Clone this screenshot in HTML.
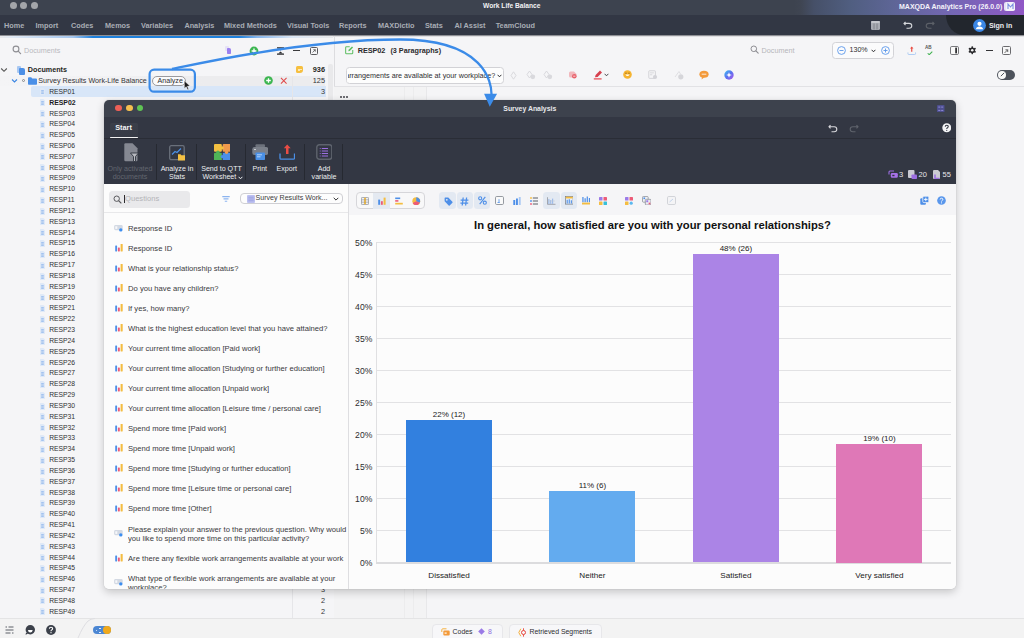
<!DOCTYPE html>
<html><head><meta charset="utf-8">
<style>
*{margin:0;padding:0;box-sizing:border-box}
html,body{width:1024px;height:638px;overflow:hidden;background:#f5f5f7;font-family:"Liberation Sans",sans-serif;position:relative}
.a{position:absolute}
.t{position:absolute;white-space:nowrap;line-height:1}
#titlebar{left:0;top:0;width:1024px;height:15px;background:linear-gradient(90deg,#3d434f 0,#3d434f 77.5%,#3f4552 78.2%,#465068 79.5%,#505e80 83%,#5d6595 87%,#7467b4 93%,#9058c6 100%)}
.dot{position:absolute;width:7px;height:7px;border-radius:50%;background:#a3a5aa;top:2.2px}
#menubar{left:0;top:15px;width:1024px;height:20px;background:#323744}
.mi{position:absolute;top:21.7px;font-size:7.3px;font-weight:bold;color:#a9adb5;white-space:nowrap;line-height:1}
#signin{left:946px;top:15px;width:78px;height:20px;background:#22262d;border-bottom-left-radius:18px 20px}
#leftpanel{left:0;top:35px;width:334px;height:583px;background:#f5f5f7}
#editor{left:334px;top:35px;width:690px;height:583px;background:#f5f5f7;border-left:1px solid #dcdcdf}
#bottombar{left:0;top:618px;width:1024px;height:20px;background:#f3f3f3;border-top:1px solid #e4e4e5}
.row{position:absolute;left:49.2px;font-size:6.75px;color:#2f2f32;white-space:nowrap;line-height:1}
.doc{position:absolute;left:40px;width:5px;height:7px;background:#dfe7f5;border-radius:1px}
.doc:after{content:"";position:absolute;left:1.2px;top:1.5px;width:2.6px;height:4px;background:repeating-linear-gradient(180deg,#8fb4ea 0 0.7px,transparent 0.7px 1.4px)}
</style></head><body>

<!-- TITLE BAR -->
<div id="titlebar" class="a"></div>
<div class="dot" style="left:9.5px"></div>
<div class="dot" style="left:20.2px"></div>
<div class="dot" style="left:31px"></div>
<div class="t" style="left:483px;top:3.4px;font-size:6.65px;font-weight:bold;color:#f2f2f4">Work Life Balance</div>
<div class="t" style="left:899px;top:3px;font-size:7px;font-weight:bold;color:#f4f2fa">MAXQDA Analytics Pro (26.0.0)</div>
<div class="a" style="left:1004px;top:2px;width:9px;height:9px;border-radius:2px;background:#e6e2f5"></div>

<!-- MENU BAR -->
<div id="menubar" class="a"></div>
<div id="signin" class="a"></div>
<div class="mi" style="left:4px">Home</div>
<div class="mi" style="left:35.6px">Import</div>
<div class="mi" style="left:71px">Codes</div>
<div class="mi" style="left:105px">Memos</div>
<div class="mi" style="left:141px">Variables</div>
<div class="mi" style="left:184.4px">Analysis</div>
<div class="mi" style="left:224px">Mixed Methods</div>
<div class="mi" style="left:287px">Visual Tools</div>
<div class="mi" style="left:339px">Reports</div>
<div class="mi" style="left:378px">MAXDictio</div>
<div class="mi" style="left:425px">Stats</div>
<div class="mi" style="left:454.5px">AI Assist</div>
<div class="mi" style="left:495.7px">TeamCloud</div>

<!-- LEFT PANEL -->
<div id="leftpanel" class="a"></div>

<!-- left toolbar -->
<div class="a" style="left:0;top:35px;width:1024px;height:1px;background:#8f9095"></div>
<div class="a" style="left:0;top:36px;width:1024px;height:1px;background:#dedee1"></div>
<div class="a" style="left:0;top:36px;width:333px;height:2px;background:linear-gradient(90deg,#e8e8ea 0,#dfe8f4 4%,#a5c6ee 21.9%,#1e80dc 27.9%,#1e80dc 71.8%,#86b5ec 77.2%,#dbe6f4 87.7%,#e8e8ea 100%)"></div>
<svg class="a" style="left:12px;top:45px" width="10" height="10" viewBox="0 0 10 10"><circle cx="4" cy="4" r="2.9" fill="none" stroke="#8e8e93" stroke-width="1.1"/><path d="M6.2 6.2L8.6 8.6" stroke="#8e8e93" stroke-width="1.2" stroke-linecap="round"/></svg>
<div class="t" style="left:24px;top:46.8px;font-size:7.2px;color:#b9b9be">Documents</div>
<div class="a" style="left:224.5px;top:46.2px;width:4px;height:5px;background:#e6e2f6;border-radius:1px"></div>
<div class="a" style="left:227px;top:48.4px;width:4.4px;height:5.6px;background:#9b80f0;border-radius:0.8px 1.8px 0.8px 0.8px"></div>
<svg class="a" style="left:248.5px;top:46px" width="10" height="10" viewBox="0 0 10 10"><circle cx="5" cy="5" r="4.4" fill="#3db651"/><path d="M5 2.6V7.4M2.6 5H7.4" stroke="#fff" stroke-width="1.4"/></svg>
<svg class="a" style="left:276.5px;top:46.5px" width="7" height="8" viewBox="0 0 7 8"><path d="M0 0.3H7V1.5H0Z M0 6.5H7V7.7H0Z" fill="#2b2b2e"/><path d="M1.3 1.4L3.5 3.4L5.7 1.4Z M1.3 6.6L3.5 4.6L5.7 6.6Z" fill="#2b2b2e"/></svg>
<div class="a" style="left:293px;top:49.8px;width:6.5px;height:1.2px;background:#3a3a3d"></div>
<div class="a" style="left:310px;top:46.5px;width:7.8px;height:8px;border:1px solid #5a5a5e;border-radius:1.5px;border-top-width:1.6px"></div>
<svg class="a" style="left:312px;top:49px" width="4" height="4" viewBox="0 0 4 4"><path d="M0.5 3.5L3.3 0.7M1.3 0.7H3.3V2.7" stroke="#444" stroke-width="0.7" fill="none"/></svg>

<!-- tree -->
<div class="a" style="left:0;top:75.5px;width:292px;height:10.6px;background:linear-gradient(90deg,#f4f4f6 0,#f1f1f3 40%,#ececee 70%)"></div>
<div class="a" style="left:292px;top:75.5px;width:33px;height:10.6px;background:#ececee"></div>
<div class="a" style="left:30.5px;top:86.1px;width:295px;height:10.6px;background:#d8e6f8;border-radius:2px 0 0 2px"></div>
<div class="a" style="left:292.3px;top:75.5px;width:0.8px;height:542.5px;background:#e6e6e9"></div>
<div class="a" style="left:327.5px;top:64px;width:5.5px;height:40px;background:#e9e9eb;border-radius:2px 2px 0 0"></div>
<svg class="a" style="left:0;top:67px" width="8" height="6" viewBox="0 0 8 6"><path d="M1.2 1.5L4 4.3L6.8 1.5" stroke="#555" stroke-width="1.1" fill="none"/></svg>
<div class="a" style="left:17px;top:66px;width:4px;height:7px;background:#a9c8f2;border-radius:1px"></div>
<div class="a" style="left:19px;top:67.5px;width:6px;height:7px;background:#4c8fe6;border-radius:1px 2px 1px 1px"></div>
<div class="t" style="left:27.8px;top:66.1px;font-size:7.2px;font-weight:bold;color:#1f1f22">Documents</div>
<svg class="a" style="left:11px;top:78px" width="7" height="6" viewBox="0 0 7 6"><path d="M1 1.5L3.5 4L6 1.5" stroke="#3b86e3" stroke-width="1.1" fill="none"/></svg>
<div class="a" style="left:21.8px;top:79.1px;width:3.2px;height:3.2px;border:0.8px solid #888;border-radius:50%"></div>
<svg class="a" style="left:28px;top:76.5px" width="9" height="8" viewBox="0 0 9 8"><path d="M0 1.2Q0 0.3 0.9 0.3H3.2L4.2 1.4H8.1Q9 1.4 9 2.3V7Q9 7.7 8.2 7.7H0.8Q0 7.7 0 7Z" fill="#4a8fe7"/></svg>
<div class="t" style="left:38.3px;top:77.9px;font-size:7.17px;color:#333336">Survey Results Work-Life Balance</div>
<div class="a" style="left:152.3px;top:75.6px;width:34px;height:10.5px;border:0.9px solid #9a9a9e;border-radius:5px;background:#fbfbfc"></div>
<div class="t" style="left:157.6px;top:78.1px;font-size:7.1px;color:#2e2e31">Analyze</div>
<svg class="a" style="left:267.9px;top:76.4px" width="0" height="0"></svg>
<svg class="a" style="left:263.6px;top:76.4px" width="9" height="9" viewBox="0 0 9 9"><circle cx="4.5" cy="4.5" r="4.3" fill="#3db651"/><path d="M4.5 2.2V6.8M2.2 4.5H6.8" stroke="#fff" stroke-width="1.3"/></svg>
<svg class="a" style="left:280px;top:77px" width="7.5" height="7.5" viewBox="0 0 8 8"><path d="M1 1L7 7M7 1L1 7" stroke="#e0494a" stroke-width="1.1"/></svg>
<div class="a" style="left:296px;top:66.2px;width:7.3px;height:7.3px;background:#f6bf3f;border-radius:1.5px 1.5px 3px 1.5px"></div>
<div class="a" style="left:297.6px;top:68.8px;width:4px;height:0.8px;background:#fde9b5"></div>
<div class="a" style="left:297.6px;top:70.4px;width:2.6px;height:0.8px;background:#fde9b5"></div>
<div class="t" style="right:699px;top:66.4px;font-size:7.3px;font-weight:bold;color:#1f1f22">936</div>
<div class="t" style="right:699px;top:77.2px;font-size:7.3px;color:#333336">125</div>
<div class="t" style="right:699px;top:88px;font-size:7.3px;color:#333336">3</div>
<div class="t" style="right:699px;top:586.2px;font-size:7.3px;color:#333336">3</div>
<div class="t" style="right:699px;top:597px;font-size:7.3px;color:#333336">2</div>
<div class="t" style="right:699px;top:607.8px;font-size:7.3px;color:#333336">2</div>
<svg class="a" style="left:40.3px;top:88.4px" width="5" height="7" viewBox="0 0 5 7"><path d="M0.6 0H3.4L5 1.6V6.4Q5 7 4.4 7H0.6Q0 7 0 6.4V0.6Q0 0 0.6 0Z" fill="#dfe9f7"/><path d="M1.2 2.6H3.8M1.2 4H3.8M1.2 5.4H3.8" stroke="#7aa8ea" stroke-width="0.65"/></svg><div class="row" style="top:88.8px">RESP01</div>
<svg class="a" style="left:40.3px;top:99.2px" width="5" height="7" viewBox="0 0 5 7"><path d="M0.6 0H3.4L5 1.6V6.4Q5 7 4.4 7H0.6Q0 7 0 6.4V0.6Q0 0 0.6 0Z" fill="#dfe9f7"/><path d="M1.2 2.6H3.8M1.2 4H3.8M1.2 5.4H3.8" stroke="#7aa8ea" stroke-width="0.65"/></svg><div class="row" style="top:99.6px;font-weight:bold;color:#1c1c1e;font-size:6.9px">RESP02</div>
<svg class="a" style="left:40.3px;top:110.1px" width="5" height="7" viewBox="0 0 5 7"><path d="M0.6 0H3.4L5 1.6V6.4Q5 7 4.4 7H0.6Q0 7 0 6.4V0.6Q0 0 0.6 0Z" fill="#dfe9f7"/><path d="M1.2 2.6H3.8M1.2 4H3.8M1.2 5.4H3.8" stroke="#7aa8ea" stroke-width="0.65"/></svg><div class="row" style="top:110.5px">RESP03</div>
<svg class="a" style="left:40.3px;top:120.9px" width="5" height="7" viewBox="0 0 5 7"><path d="M0.6 0H3.4L5 1.6V6.4Q5 7 4.4 7H0.6Q0 7 0 6.4V0.6Q0 0 0.6 0Z" fill="#dfe9f7"/><path d="M1.2 2.6H3.8M1.2 4H3.8M1.2 5.4H3.8" stroke="#7aa8ea" stroke-width="0.65"/></svg><div class="row" style="top:121.3px">RESP04</div>
<svg class="a" style="left:40.3px;top:131.7px" width="5" height="7" viewBox="0 0 5 7"><path d="M0.6 0H3.4L5 1.6V6.4Q5 7 4.4 7H0.6Q0 7 0 6.4V0.6Q0 0 0.6 0Z" fill="#dfe9f7"/><path d="M1.2 2.6H3.8M1.2 4H3.8M1.2 5.4H3.8" stroke="#7aa8ea" stroke-width="0.65"/></svg><div class="row" style="top:132.1px">RESP05</div>
<svg class="a" style="left:40.3px;top:142.6px" width="5" height="7" viewBox="0 0 5 7"><path d="M0.6 0H3.4L5 1.6V6.4Q5 7 4.4 7H0.6Q0 7 0 6.4V0.6Q0 0 0.6 0Z" fill="#dfe9f7"/><path d="M1.2 2.6H3.8M1.2 4H3.8M1.2 5.4H3.8" stroke="#7aa8ea" stroke-width="0.65"/></svg><div class="row" style="top:143.0px">RESP06</div>
<svg class="a" style="left:40.3px;top:153.4px" width="5" height="7" viewBox="0 0 5 7"><path d="M0.6 0H3.4L5 1.6V6.4Q5 7 4.4 7H0.6Q0 7 0 6.4V0.6Q0 0 0.6 0Z" fill="#dfe9f7"/><path d="M1.2 2.6H3.8M1.2 4H3.8M1.2 5.4H3.8" stroke="#7aa8ea" stroke-width="0.65"/></svg><div class="row" style="top:153.8px">RESP07</div>
<svg class="a" style="left:40.3px;top:164.2px" width="5" height="7" viewBox="0 0 5 7"><path d="M0.6 0H3.4L5 1.6V6.4Q5 7 4.4 7H0.6Q0 7 0 6.4V0.6Q0 0 0.6 0Z" fill="#dfe9f7"/><path d="M1.2 2.6H3.8M1.2 4H3.8M1.2 5.4H3.8" stroke="#7aa8ea" stroke-width="0.65"/></svg><div class="row" style="top:164.6px">RESP08</div>
<svg class="a" style="left:40.3px;top:175.0px" width="5" height="7" viewBox="0 0 5 7"><path d="M0.6 0H3.4L5 1.6V6.4Q5 7 4.4 7H0.6Q0 7 0 6.4V0.6Q0 0 0.6 0Z" fill="#dfe9f7"/><path d="M1.2 2.6H3.8M1.2 4H3.8M1.2 5.4H3.8" stroke="#7aa8ea" stroke-width="0.65"/></svg><div class="row" style="top:175.4px">RESP09</div>
<svg class="a" style="left:40.3px;top:185.9px" width="5" height="7" viewBox="0 0 5 7"><path d="M0.6 0H3.4L5 1.6V6.4Q5 7 4.4 7H0.6Q0 7 0 6.4V0.6Q0 0 0.6 0Z" fill="#dfe9f7"/><path d="M1.2 2.6H3.8M1.2 4H3.8M1.2 5.4H3.8" stroke="#7aa8ea" stroke-width="0.65"/></svg><div class="row" style="top:186.3px">RESP10</div>
<svg class="a" style="left:40.3px;top:196.7px" width="5" height="7" viewBox="0 0 5 7"><path d="M0.6 0H3.4L5 1.6V6.4Q5 7 4.4 7H0.6Q0 7 0 6.4V0.6Q0 0 0.6 0Z" fill="#dfe9f7"/><path d="M1.2 2.6H3.8M1.2 4H3.8M1.2 5.4H3.8" stroke="#7aa8ea" stroke-width="0.65"/></svg><div class="row" style="top:197.1px">RESP11</div>
<svg class="a" style="left:40.3px;top:207.5px" width="5" height="7" viewBox="0 0 5 7"><path d="M0.6 0H3.4L5 1.6V6.4Q5 7 4.4 7H0.6Q0 7 0 6.4V0.6Q0 0 0.6 0Z" fill="#dfe9f7"/><path d="M1.2 2.6H3.8M1.2 4H3.8M1.2 5.4H3.8" stroke="#7aa8ea" stroke-width="0.65"/></svg><div class="row" style="top:207.9px">RESP12</div>
<svg class="a" style="left:40.3px;top:218.4px" width="5" height="7" viewBox="0 0 5 7"><path d="M0.6 0H3.4L5 1.6V6.4Q5 7 4.4 7H0.6Q0 7 0 6.4V0.6Q0 0 0.6 0Z" fill="#dfe9f7"/><path d="M1.2 2.6H3.8M1.2 4H3.8M1.2 5.4H3.8" stroke="#7aa8ea" stroke-width="0.65"/></svg><div class="row" style="top:218.8px">RESP13</div>
<svg class="a" style="left:40.3px;top:229.2px" width="5" height="7" viewBox="0 0 5 7"><path d="M0.6 0H3.4L5 1.6V6.4Q5 7 4.4 7H0.6Q0 7 0 6.4V0.6Q0 0 0.6 0Z" fill="#dfe9f7"/><path d="M1.2 2.6H3.8M1.2 4H3.8M1.2 5.4H3.8" stroke="#7aa8ea" stroke-width="0.65"/></svg><div class="row" style="top:229.6px">RESP14</div>
<svg class="a" style="left:40.3px;top:240.0px" width="5" height="7" viewBox="0 0 5 7"><path d="M0.6 0H3.4L5 1.6V6.4Q5 7 4.4 7H0.6Q0 7 0 6.4V0.6Q0 0 0.6 0Z" fill="#dfe9f7"/><path d="M1.2 2.6H3.8M1.2 4H3.8M1.2 5.4H3.8" stroke="#7aa8ea" stroke-width="0.65"/></svg><div class="row" style="top:240.4px">RESP15</div>
<svg class="a" style="left:40.3px;top:250.8px" width="5" height="7" viewBox="0 0 5 7"><path d="M0.6 0H3.4L5 1.6V6.4Q5 7 4.4 7H0.6Q0 7 0 6.4V0.6Q0 0 0.6 0Z" fill="#dfe9f7"/><path d="M1.2 2.6H3.8M1.2 4H3.8M1.2 5.4H3.8" stroke="#7aa8ea" stroke-width="0.65"/></svg><div class="row" style="top:251.2px">RESP16</div>
<svg class="a" style="left:40.3px;top:261.7px" width="5" height="7" viewBox="0 0 5 7"><path d="M0.6 0H3.4L5 1.6V6.4Q5 7 4.4 7H0.6Q0 7 0 6.4V0.6Q0 0 0.6 0Z" fill="#dfe9f7"/><path d="M1.2 2.6H3.8M1.2 4H3.8M1.2 5.4H3.8" stroke="#7aa8ea" stroke-width="0.65"/></svg><div class="row" style="top:262.1px">RESP17</div>
<svg class="a" style="left:40.3px;top:272.5px" width="5" height="7" viewBox="0 0 5 7"><path d="M0.6 0H3.4L5 1.6V6.4Q5 7 4.4 7H0.6Q0 7 0 6.4V0.6Q0 0 0.6 0Z" fill="#dfe9f7"/><path d="M1.2 2.6H3.8M1.2 4H3.8M1.2 5.4H3.8" stroke="#7aa8ea" stroke-width="0.65"/></svg><div class="row" style="top:272.9px">RESP18</div>
<svg class="a" style="left:40.3px;top:283.3px" width="5" height="7" viewBox="0 0 5 7"><path d="M0.6 0H3.4L5 1.6V6.4Q5 7 4.4 7H0.6Q0 7 0 6.4V0.6Q0 0 0.6 0Z" fill="#dfe9f7"/><path d="M1.2 2.6H3.8M1.2 4H3.8M1.2 5.4H3.8" stroke="#7aa8ea" stroke-width="0.65"/></svg><div class="row" style="top:283.7px">RESP19</div>
<svg class="a" style="left:40.3px;top:294.2px" width="5" height="7" viewBox="0 0 5 7"><path d="M0.6 0H3.4L5 1.6V6.4Q5 7 4.4 7H0.6Q0 7 0 6.4V0.6Q0 0 0.6 0Z" fill="#dfe9f7"/><path d="M1.2 2.6H3.8M1.2 4H3.8M1.2 5.4H3.8" stroke="#7aa8ea" stroke-width="0.65"/></svg><div class="row" style="top:294.6px">RESP20</div>
<svg class="a" style="left:40.3px;top:305.0px" width="5" height="7" viewBox="0 0 5 7"><path d="M0.6 0H3.4L5 1.6V6.4Q5 7 4.4 7H0.6Q0 7 0 6.4V0.6Q0 0 0.6 0Z" fill="#dfe9f7"/><path d="M1.2 2.6H3.8M1.2 4H3.8M1.2 5.4H3.8" stroke="#7aa8ea" stroke-width="0.65"/></svg><div class="row" style="top:305.4px">RESP21</div>
<svg class="a" style="left:40.3px;top:315.8px" width="5" height="7" viewBox="0 0 5 7"><path d="M0.6 0H3.4L5 1.6V6.4Q5 7 4.4 7H0.6Q0 7 0 6.4V0.6Q0 0 0.6 0Z" fill="#dfe9f7"/><path d="M1.2 2.6H3.8M1.2 4H3.8M1.2 5.4H3.8" stroke="#7aa8ea" stroke-width="0.65"/></svg><div class="row" style="top:316.2px">RESP22</div>
<svg class="a" style="left:40.3px;top:326.7px" width="5" height="7" viewBox="0 0 5 7"><path d="M0.6 0H3.4L5 1.6V6.4Q5 7 4.4 7H0.6Q0 7 0 6.4V0.6Q0 0 0.6 0Z" fill="#dfe9f7"/><path d="M1.2 2.6H3.8M1.2 4H3.8M1.2 5.4H3.8" stroke="#7aa8ea" stroke-width="0.65"/></svg><div class="row" style="top:327.1px">RESP23</div>
<svg class="a" style="left:40.3px;top:337.5px" width="5" height="7" viewBox="0 0 5 7"><path d="M0.6 0H3.4L5 1.6V6.4Q5 7 4.4 7H0.6Q0 7 0 6.4V0.6Q0 0 0.6 0Z" fill="#dfe9f7"/><path d="M1.2 2.6H3.8M1.2 4H3.8M1.2 5.4H3.8" stroke="#7aa8ea" stroke-width="0.65"/></svg><div class="row" style="top:337.9px">RESP24</div>
<svg class="a" style="left:40.3px;top:348.3px" width="5" height="7" viewBox="0 0 5 7"><path d="M0.6 0H3.4L5 1.6V6.4Q5 7 4.4 7H0.6Q0 7 0 6.4V0.6Q0 0 0.6 0Z" fill="#dfe9f7"/><path d="M1.2 2.6H3.8M1.2 4H3.8M1.2 5.4H3.8" stroke="#7aa8ea" stroke-width="0.65"/></svg><div class="row" style="top:348.7px">RESP25</div>
<svg class="a" style="left:40.3px;top:359.1px" width="5" height="7" viewBox="0 0 5 7"><path d="M0.6 0H3.4L5 1.6V6.4Q5 7 4.4 7H0.6Q0 7 0 6.4V0.6Q0 0 0.6 0Z" fill="#dfe9f7"/><path d="M1.2 2.6H3.8M1.2 4H3.8M1.2 5.4H3.8" stroke="#7aa8ea" stroke-width="0.65"/></svg><div class="row" style="top:359.6px">RESP26</div>
<svg class="a" style="left:40.3px;top:370.0px" width="5" height="7" viewBox="0 0 5 7"><path d="M0.6 0H3.4L5 1.6V6.4Q5 7 4.4 7H0.6Q0 7 0 6.4V0.6Q0 0 0.6 0Z" fill="#dfe9f7"/><path d="M1.2 2.6H3.8M1.2 4H3.8M1.2 5.4H3.8" stroke="#7aa8ea" stroke-width="0.65"/></svg><div class="row" style="top:370.4px">RESP27</div>
<svg class="a" style="left:40.3px;top:380.8px" width="5" height="7" viewBox="0 0 5 7"><path d="M0.6 0H3.4L5 1.6V6.4Q5 7 4.4 7H0.6Q0 7 0 6.4V0.6Q0 0 0.6 0Z" fill="#dfe9f7"/><path d="M1.2 2.6H3.8M1.2 4H3.8M1.2 5.4H3.8" stroke="#7aa8ea" stroke-width="0.65"/></svg><div class="row" style="top:381.2px">RESP28</div>
<svg class="a" style="left:40.3px;top:391.6px" width="5" height="7" viewBox="0 0 5 7"><path d="M0.6 0H3.4L5 1.6V6.4Q5 7 4.4 7H0.6Q0 7 0 6.4V0.6Q0 0 0.6 0Z" fill="#dfe9f7"/><path d="M1.2 2.6H3.8M1.2 4H3.8M1.2 5.4H3.8" stroke="#7aa8ea" stroke-width="0.65"/></svg><div class="row" style="top:392.0px">RESP29</div>
<svg class="a" style="left:40.3px;top:402.5px" width="5" height="7" viewBox="0 0 5 7"><path d="M0.6 0H3.4L5 1.6V6.4Q5 7 4.4 7H0.6Q0 7 0 6.4V0.6Q0 0 0.6 0Z" fill="#dfe9f7"/><path d="M1.2 2.6H3.8M1.2 4H3.8M1.2 5.4H3.8" stroke="#7aa8ea" stroke-width="0.65"/></svg><div class="row" style="top:402.9px">RESP30</div>
<svg class="a" style="left:40.3px;top:413.3px" width="5" height="7" viewBox="0 0 5 7"><path d="M0.6 0H3.4L5 1.6V6.4Q5 7 4.4 7H0.6Q0 7 0 6.4V0.6Q0 0 0.6 0Z" fill="#dfe9f7"/><path d="M1.2 2.6H3.8M1.2 4H3.8M1.2 5.4H3.8" stroke="#7aa8ea" stroke-width="0.65"/></svg><div class="row" style="top:413.7px">RESP31</div>
<svg class="a" style="left:40.3px;top:424.1px" width="5" height="7" viewBox="0 0 5 7"><path d="M0.6 0H3.4L5 1.6V6.4Q5 7 4.4 7H0.6Q0 7 0 6.4V0.6Q0 0 0.6 0Z" fill="#dfe9f7"/><path d="M1.2 2.6H3.8M1.2 4H3.8M1.2 5.4H3.8" stroke="#7aa8ea" stroke-width="0.65"/></svg><div class="row" style="top:424.5px">RESP32</div>
<svg class="a" style="left:40.3px;top:435.0px" width="5" height="7" viewBox="0 0 5 7"><path d="M0.6 0H3.4L5 1.6V6.4Q5 7 4.4 7H0.6Q0 7 0 6.4V0.6Q0 0 0.6 0Z" fill="#dfe9f7"/><path d="M1.2 2.6H3.8M1.2 4H3.8M1.2 5.4H3.8" stroke="#7aa8ea" stroke-width="0.65"/></svg><div class="row" style="top:435.4px">RESP33</div>
<svg class="a" style="left:40.3px;top:445.8px" width="5" height="7" viewBox="0 0 5 7"><path d="M0.6 0H3.4L5 1.6V6.4Q5 7 4.4 7H0.6Q0 7 0 6.4V0.6Q0 0 0.6 0Z" fill="#dfe9f7"/><path d="M1.2 2.6H3.8M1.2 4H3.8M1.2 5.4H3.8" stroke="#7aa8ea" stroke-width="0.65"/></svg><div class="row" style="top:446.2px">RESP34</div>
<svg class="a" style="left:40.3px;top:456.6px" width="5" height="7" viewBox="0 0 5 7"><path d="M0.6 0H3.4L5 1.6V6.4Q5 7 4.4 7H0.6Q0 7 0 6.4V0.6Q0 0 0.6 0Z" fill="#dfe9f7"/><path d="M1.2 2.6H3.8M1.2 4H3.8M1.2 5.4H3.8" stroke="#7aa8ea" stroke-width="0.65"/></svg><div class="row" style="top:457.0px">RESP35</div>
<svg class="a" style="left:40.3px;top:467.5px" width="5" height="7" viewBox="0 0 5 7"><path d="M0.6 0H3.4L5 1.6V6.4Q5 7 4.4 7H0.6Q0 7 0 6.4V0.6Q0 0 0.6 0Z" fill="#dfe9f7"/><path d="M1.2 2.6H3.8M1.2 4H3.8M1.2 5.4H3.8" stroke="#7aa8ea" stroke-width="0.65"/></svg><div class="row" style="top:467.9px">RESP36</div>
<svg class="a" style="left:40.3px;top:478.3px" width="5" height="7" viewBox="0 0 5 7"><path d="M0.6 0H3.4L5 1.6V6.4Q5 7 4.4 7H0.6Q0 7 0 6.4V0.6Q0 0 0.6 0Z" fill="#dfe9f7"/><path d="M1.2 2.6H3.8M1.2 4H3.8M1.2 5.4H3.8" stroke="#7aa8ea" stroke-width="0.65"/></svg><div class="row" style="top:478.7px">RESP37</div>
<svg class="a" style="left:40.3px;top:489.1px" width="5" height="7" viewBox="0 0 5 7"><path d="M0.6 0H3.4L5 1.6V6.4Q5 7 4.4 7H0.6Q0 7 0 6.4V0.6Q0 0 0.6 0Z" fill="#dfe9f7"/><path d="M1.2 2.6H3.8M1.2 4H3.8M1.2 5.4H3.8" stroke="#7aa8ea" stroke-width="0.65"/></svg><div class="row" style="top:489.5px">RESP38</div>
<svg class="a" style="left:40.3px;top:499.9px" width="5" height="7" viewBox="0 0 5 7"><path d="M0.6 0H3.4L5 1.6V6.4Q5 7 4.4 7H0.6Q0 7 0 6.4V0.6Q0 0 0.6 0Z" fill="#dfe9f7"/><path d="M1.2 2.6H3.8M1.2 4H3.8M1.2 5.4H3.8" stroke="#7aa8ea" stroke-width="0.65"/></svg><div class="row" style="top:500.3px">RESP39</div>
<svg class="a" style="left:40.3px;top:510.8px" width="5" height="7" viewBox="0 0 5 7"><path d="M0.6 0H3.4L5 1.6V6.4Q5 7 4.4 7H0.6Q0 7 0 6.4V0.6Q0 0 0.6 0Z" fill="#dfe9f7"/><path d="M1.2 2.6H3.8M1.2 4H3.8M1.2 5.4H3.8" stroke="#7aa8ea" stroke-width="0.65"/></svg><div class="row" style="top:511.2px">RESP40</div>
<svg class="a" style="left:40.3px;top:521.6px" width="5" height="7" viewBox="0 0 5 7"><path d="M0.6 0H3.4L5 1.6V6.4Q5 7 4.4 7H0.6Q0 7 0 6.4V0.6Q0 0 0.6 0Z" fill="#dfe9f7"/><path d="M1.2 2.6H3.8M1.2 4H3.8M1.2 5.4H3.8" stroke="#7aa8ea" stroke-width="0.65"/></svg><div class="row" style="top:522.0px">RESP41</div>
<svg class="a" style="left:40.3px;top:532.4px" width="5" height="7" viewBox="0 0 5 7"><path d="M0.6 0H3.4L5 1.6V6.4Q5 7 4.4 7H0.6Q0 7 0 6.4V0.6Q0 0 0.6 0Z" fill="#dfe9f7"/><path d="M1.2 2.6H3.8M1.2 4H3.8M1.2 5.4H3.8" stroke="#7aa8ea" stroke-width="0.65"/></svg><div class="row" style="top:532.8px">RESP42</div>
<svg class="a" style="left:40.3px;top:543.3px" width="5" height="7" viewBox="0 0 5 7"><path d="M0.6 0H3.4L5 1.6V6.4Q5 7 4.4 7H0.6Q0 7 0 6.4V0.6Q0 0 0.6 0Z" fill="#dfe9f7"/><path d="M1.2 2.6H3.8M1.2 4H3.8M1.2 5.4H3.8" stroke="#7aa8ea" stroke-width="0.65"/></svg><div class="row" style="top:543.7px">RESP43</div>
<svg class="a" style="left:40.3px;top:554.1px" width="5" height="7" viewBox="0 0 5 7"><path d="M0.6 0H3.4L5 1.6V6.4Q5 7 4.4 7H0.6Q0 7 0 6.4V0.6Q0 0 0.6 0Z" fill="#dfe9f7"/><path d="M1.2 2.6H3.8M1.2 4H3.8M1.2 5.4H3.8" stroke="#7aa8ea" stroke-width="0.65"/></svg><div class="row" style="top:554.5px">RESP44</div>
<svg class="a" style="left:40.3px;top:564.9px" width="5" height="7" viewBox="0 0 5 7"><path d="M0.6 0H3.4L5 1.6V6.4Q5 7 4.4 7H0.6Q0 7 0 6.4V0.6Q0 0 0.6 0Z" fill="#dfe9f7"/><path d="M1.2 2.6H3.8M1.2 4H3.8M1.2 5.4H3.8" stroke="#7aa8ea" stroke-width="0.65"/></svg><div class="row" style="top:565.3px">RESP45</div>
<svg class="a" style="left:40.3px;top:575.7px" width="5" height="7" viewBox="0 0 5 7"><path d="M0.6 0H3.4L5 1.6V6.4Q5 7 4.4 7H0.6Q0 7 0 6.4V0.6Q0 0 0.6 0Z" fill="#dfe9f7"/><path d="M1.2 2.6H3.8M1.2 4H3.8M1.2 5.4H3.8" stroke="#7aa8ea" stroke-width="0.65"/></svg><div class="row" style="top:576.2px">RESP46</div>
<svg class="a" style="left:40.3px;top:586.6px" width="5" height="7" viewBox="0 0 5 7"><path d="M0.6 0H3.4L5 1.6V6.4Q5 7 4.4 7H0.6Q0 7 0 6.4V0.6Q0 0 0.6 0Z" fill="#dfe9f7"/><path d="M1.2 2.6H3.8M1.2 4H3.8M1.2 5.4H3.8" stroke="#7aa8ea" stroke-width="0.65"/></svg><div class="row" style="top:587.0px">RESP47</div>
<svg class="a" style="left:40.3px;top:597.4px" width="5" height="7" viewBox="0 0 5 7"><path d="M0.6 0H3.4L5 1.6V6.4Q5 7 4.4 7H0.6Q0 7 0 6.4V0.6Q0 0 0.6 0Z" fill="#dfe9f7"/><path d="M1.2 2.6H3.8M1.2 4H3.8M1.2 5.4H3.8" stroke="#7aa8ea" stroke-width="0.65"/></svg><div class="row" style="top:597.8px">RESP48</div>
<svg class="a" style="left:40.3px;top:608.2px" width="5" height="7" viewBox="0 0 5 7"><path d="M0.6 0H3.4L5 1.6V6.4Q5 7 4.4 7H0.6Q0 7 0 6.4V0.6Q0 0 0.6 0Z" fill="#dfe9f7"/><path d="M1.2 2.6H3.8M1.2 4H3.8M1.2 5.4H3.8" stroke="#7aa8ea" stroke-width="0.65"/></svg><div class="row" style="top:608.6px">RESP49</div>
<svg class="a" style="left:40.3px;top:619.1px" width="5" height="7" viewBox="0 0 5 7"><path d="M0.6 0H3.4L5 1.6V6.4Q5 7 4.4 7H0.6Q0 7 0 6.4V0.6Q0 0 0.6 0Z" fill="#dfe9f7"/><path d="M1.2 2.6H3.8M1.2 4H3.8M1.2 5.4H3.8" stroke="#7aa8ea" stroke-width="0.65"/></svg><div class="row" style="top:619.5px">RESP50</div>
<div id="editor" class="a"></div>
<div id="bottombar" class="a"></div>
<!-- EDITOR -->
<div class="a" style="left:334px;top:35px;width:690px;height:1px;background:#8f9095"></div>
<div class="a" style="left:334px;top:36px;width:690px;height:1px;background:#dedee1"></div>
<svg class="a" style="left:345px;top:46.4px" width="8.5" height="8.5" viewBox="0 0 9 9"><path d="M5 0.8H1.6Q0.7 0.8 0.7 1.7V7.4Q0.7 8.3 1.6 8.3H7.3Q8.2 8.3 8.2 7.4V4.2" stroke="#5fbf63" stroke-width="1.1" fill="none"/><path d="M3.5 5.6L3.8 4.1L7.4 0.5L8.6 1.7L5 5.3Z" fill="#5fbf63"/></svg>
<div class="t" style="left:357.7px;top:47px;font-size:7.3px;font-weight:bold;color:#2a2a2d;letter-spacing:-0.05px">RESP02</div>
<div class="t" style="left:390.4px;top:47.1px;font-size:7.24px;font-weight:bold;color:#2a2a2d">(3 Paragraphs)</div>
<svg class="a" style="left:749.5px;top:45.2px" width="9" height="9" viewBox="0 0 9 9"><circle cx="3.8" cy="3.8" r="2.8" fill="none" stroke="#8e8e93" stroke-width="1"/><path d="M5.9 5.9L8.2 8.2" stroke="#8e8e93" stroke-width="1.1" stroke-linecap="round"/></svg>
<div class="t" style="left:761.6px;top:46.8px;font-size:7.24px;color:#b5b5ba">Document</div>
<div class="a" style="left:832.3px;top:41.5px;width:62.2px;height:17.2px;border-radius:3.5px;background:#fbfbfc;border:0.9px solid #d3d3d7"></div>
<svg class="a" style="left:836.5px;top:45.6px" width="9" height="9" viewBox="0 0 9 9"><circle cx="4.5" cy="4.5" r="3.9" fill="none" stroke="#5b97ea" stroke-width="0.9"/><path d="M2.5 4.5H6.5" stroke="#5b97ea" stroke-width="0.9"/></svg>
<div class="t" style="left:849.5px;top:46.6px;font-size:7.1px;color:#2e2e31">130%</div>
<svg class="a" style="left:870.6px;top:48.5px" width="5" height="4" viewBox="0 0 5 4"><path d="M0.6 0.8L2.5 2.8L4.4 0.8" stroke="#2e2e31" stroke-width="1" fill="none"/></svg>
<svg class="a" style="left:881px;top:45.6px" width="9" height="9" viewBox="0 0 9 9"><circle cx="4.5" cy="4.5" r="3.9" fill="none" stroke="#5b97ea" stroke-width="0.9"/><path d="M2.5 4.5H6.5M4.5 2.5V6.5" stroke="#5b97ea" stroke-width="0.9"/></svg>
<svg class="a" style="left:907px;top:45.5px" width="9.5" height="9.5" viewBox="0 0 10 10"><path d="M5 0.6L3.2 2.6H4.4V6H5.6V2.6H6.8Z" fill="#e8463c"/><path d="M1 6.8V8Q1 9 2 9H8Q9 9 9 8V6.8" stroke="#a9c8f2" stroke-width="1" fill="none"/></svg>
<div class="t" style="left:925px;top:45.6px;font-size:4.6px;font-weight:bold;color:#55555a">AB</div>
<svg class="a" style="left:927.3px;top:50.6px" width="6" height="4.5" viewBox="0 0 7 5"><path d="M0.8 2.5L2.6 4.2L6.2 0.6" stroke="#3fb24f" stroke-width="1.2" fill="none"/></svg>
<svg class="a" style="left:950px;top:45.8px" width="9" height="9" viewBox="0 0 9 9"><rect x="0.5" y="0.5" width="8" height="8" rx="1.3" fill="#fafafa" stroke="#6a6a6e" stroke-width="0.9"/><rect x="5.2" y="1.6" width="1.8" height="5.8" fill="#333336"/></svg>
<svg class="a" style="left:967.6px;top:46px" width="8.5" height="8.5" viewBox="0 0 10 10"><g fill="#2a2a2d"><circle cx="5" cy="5" r="3.3"/><rect x="4.1" y="0.4" width="1.8" height="9.2" rx="0.5"/><rect x="4.1" y="0.4" width="1.8" height="9.2" rx="0.5" transform="rotate(60 5 5)"/><rect x="4.1" y="0.4" width="1.8" height="9.2" rx="0.5" transform="rotate(120 5 5)"/></g><circle cx="5" cy="5" r="1.5" fill="#f4f4f6"/></svg>
<div class="a" style="left:985.5px;top:49.7px;width:7px;height:1.2px;background:#333336"></div>
<div class="a" style="left:1002px;top:46px;width:8.5px;height:8.5px;border:0.9px solid #6a6a6e;border-top-width:1.7px;border-radius:1.5px;background:#f7f7f8"></div>
<svg class="a" style="left:1004.3px;top:48.6px" width="4.5" height="4.5" viewBox="0 0 4 4"><path d="M0.5 3.5L3.3 0.7M1.3 0.7H3.3V2.7" stroke="#444" stroke-width="0.7" fill="none"/></svg>
<div class="a" style="left:345.5px;top:66.7px;width:158.1px;height:16.9px;border-radius:3.5px;background:#fdfdfd;border:0.9px solid #d2d2d6;overflow:hidden">
  <div class="t" style="right:7.4px;top:4.8px;font-size:7.22px;color:#2e2e31">arrangements are available at your workplace?</div>
  <div class="a" style="left:0;top:0;width:1.5px;height:16px;background:#fdfdfd"></div>
</div>
<svg class="a" style="left:497px;top:73.8px" width="5" height="4" viewBox="0 0 5 4"><path d="M0.6 0.8L2.5 2.8L4.4 0.8" stroke="#2e2e31" stroke-width="1" fill="none"/></svg>
<svg class="a" style="left:509.5px;top:70.5px" width="7" height="9" viewBox="0 0 7 9"><path d="M3.5 0.8L6 4.5L3.5 8.2L1 4.5Z" fill="none" stroke="#d6d6da" stroke-width="0.9"/></svg>
<svg class="a" style="left:525.5px;top:70px" width="10" height="10" viewBox="0 0 10 10"><path d="M3.5 1L6 4.5L3.5 8L1 4.5Z" fill="none" stroke="#d6d6da" stroke-width="0.9"/><circle cx="6.8" cy="6.8" r="2.4" fill="#d9d9dd"/></svg>
<svg class="a" style="left:542.5px;top:70px" width="10" height="10" viewBox="0 0 10 10"><path d="M3.5 1L6 4.5L3.5 8L1 4.5Z" fill="none" stroke="#d6d6da" stroke-width="0.9"/><circle cx="6.8" cy="6.8" r="2.4" fill="#d9d9dd"/></svg>
<svg class="a" style="left:568px;top:70px" width="10" height="10" viewBox="0 0 10 10"><path d="M1 3Q1 1.5 2.5 1.5H6L8.5 4V5Q8.5 7.5 6 7.5H2.5Q1 7.5 1 6Z" fill="#f1b8bd"/><circle cx="6.3" cy="6.2" r="2.3" fill="#e8616b"/><path d="M5.2 6.2H7.4" stroke="#fff" stroke-width="0.7"/></svg>
<svg class="a" style="left:593px;top:69.5px" width="10" height="10" viewBox="0 0 10 10"><path d="M2 7.2L2.6 5L7 0.6L9 2.6L4.6 7Z" fill="#d6404f"/><rect x="0.8" y="8.3" width="7.8" height="1.2" fill="#e8464f"/></svg>
<svg class="a" style="left:604.2px;top:73px" width="5" height="4" viewBox="0 0 5 4"><path d="M0.6 0.8L2.5 2.8L4.4 0.8" stroke="#3a3a3d" stroke-width="0.9" fill="none"/></svg>
<svg class="a" style="left:622.5px;top:70px" width="9" height="9" viewBox="0 0 9 9"><circle cx="4.5" cy="4.5" r="4.3" fill="#f5b431"/><path d="M2.3 4.6Q4.5 7.6 6.7 4.6Z" fill="#fff"/><circle cx="3" cy="3.2" r="0.6" fill="#8a5a10"/><circle cx="6" cy="3.2" r="0.6" fill="#8a5a10"/></svg>
<svg class="a" style="left:648px;top:70px" width="9.5" height="9.5" viewBox="0 0 10 10"><rect x="0.8" y="0.8" width="7" height="8" rx="0.8" fill="none" stroke="#cfcfd4" stroke-width="0.9"/><path d="M2.2 3H6.2M2.2 5H4.5" stroke="#cfcfd4" stroke-width="0.8"/><circle cx="7.4" cy="7.4" r="2.2" fill="#d3d3d8"/></svg>
<svg class="a" style="left:674px;top:70px" width="10" height="10" viewBox="0 0 10 10"><path d="M1 7L5 1.5L6.5 4" fill="none" stroke="#dcdce0" stroke-width="0.9"/><circle cx="6.8" cy="6.8" r="2.6" fill="#d6d6da"/></svg>
<svg class="a" style="left:698.5px;top:69.8px" width="10" height="10" viewBox="0 0 10 10"><ellipse cx="5" cy="4.2" rx="4.6" ry="3.5" fill="#f39a3a"/><path d="M3 7L2.6 9.4L5.4 7.3Z" fill="#f39a3a"/><path d="M2.7 4.2H7.3" stroke="#fff" stroke-width="0.8"/></svg>
<svg class="a" style="left:724px;top:69.5px" width="10" height="10" viewBox="0 0 10 10"><defs><linearGradient id="gq" x1="0" y1="0" x2="1" y2="1"><stop offset="0" stop-color="#3ec0f0"/><stop offset="0.5" stop-color="#5a6ff0"/><stop offset="1" stop-color="#b05ae8"/></linearGradient></defs><circle cx="5" cy="5" r="4.7" fill="url(#gq)"/><path d="M5 2.2L5.8 4.2L7.8 5L5.8 5.8L5 7.8L4.2 5.8L2.2 5L4.2 4.2Z" fill="#fff"/></svg>
<div class="a" style="left:997.3px;top:70.1px;width:18px;height:9.6px;border-radius:5px;background:#4e535c"></div>
<div class="a" style="left:998.3px;top:71px;width:7.8px;height:7.8px;border-radius:50%;background:#fafafa"></div>
<svg class="a" style="left:999.7px;top:72.4px" width="5" height="5" viewBox="0 0 5 5"><path d="M0.8 4.2L4.2 0.8" stroke="#4e535c" stroke-width="1"/></svg>
<div class="a" style="left:334px;top:86px;width:690px;height:0.9px;background:#e2e2e5"></div>
<div class="a" style="left:334px;top:87px;width:93px;height:531px;background:#f3f3f4;border-right:0.8px solid #e8e8ea"></div>
<div class="a" style="left:404px;top:87px;width:1px;height:531px;background:#ececed"></div>
<div class="a" style="left:413px;top:87px;width:1px;height:531px;background:#ececed"></div>
<div class="a" style="left:340.3px;top:95.8px;width:1.9px;height:1.9px;background:#6e6e73"></div>
<div class="a" style="left:343.3px;top:95.8px;width:1.9px;height:1.9px;background:#6e6e73"></div>
<div class="a" style="left:346.3px;top:95.8px;width:1.9px;height:1.9px;background:#6e6e73"></div>




<!-- menubar right -->
<svg class="a" style="left:870.8px;top:21px" width="9" height="9" viewBox="0 0 9 9"><rect x="0" y="0" width="9" height="9" rx="1.6" fill="#a9acb3"/><rect x="0" y="0" width="9" height="2" rx="1" fill="#c5c7cc"/><path d="M3 2.5V8.5M6 2.5V8.5" stroke="#767a82" stroke-width="0.8"/></svg>
<svg class="a" style="left:903px;top:21px" width="10" height="8" viewBox="0 0 10 8"><path d="M2.5 0.8L1 2.4L2.5 4M1.2 2.4H6Q8.8 2.4 8.8 4.8Q8.8 7.2 6 7.2H3.5" stroke="#d6d8dc" stroke-width="1.1" fill="none"/></svg>
<svg class="a" style="left:924.5px;top:21px" width="10" height="8" viewBox="0 0 10 8"><path d="M7.5 0.8L9 2.4L7.5 4M8.8 2.4H4Q1.2 2.4 1.2 4.8Q1.2 7.2 4 7.2H6.5" stroke="#5c6068" stroke-width="1.1" fill="none"/></svg>
<svg class="a" style="left:972.9px;top:19px" width="13" height="13" viewBox="0 0 13 13"><circle cx="6.5" cy="6.5" r="6.4" fill="#3b87e6"/><circle cx="6.5" cy="4.8" r="2.1" fill="#fff"/><path d="M2.8 10.2Q3.5 7.6 6.5 7.6Q9.5 7.6 10.2 10.2Z" fill="#fff"/></svg>
<div class="t" style="left:988.9px;top:22.1px;font-size:7.05px;font-weight:bold;color:#ececef">Sign in</div>
<svg class="a" style="left:1006.2px;top:1.8px" width="9" height="9" viewBox="0 0 9 9"><rect x="0" y="0" width="9" height="9" rx="1.8" fill="#f4f2fa"/><path d="M2 7V2L4.5 5L7 2V7" stroke="#7b8fe0" stroke-width="1.1" fill="none"/></svg>
<!-- bottom bar -->
<svg class="a" style="left:5px;top:626px" width="9" height="8" viewBox="0 0 9 8"><path d="M0.5 1H2M3.5 1H8.5M0.5 4H8.5M0.5 7H5.5M7 7H8.5" stroke="#5d6168" stroke-width="1.1"/></svg>
<svg class="a" style="left:25.2px;top:625.2px" width="10.5" height="10" viewBox="0 0 10.5 10"><circle cx="5.3" cy="4.8" r="4.7" fill="#3b404a"/><path d="M1 7.5L0.6 9.8L3.3 8.6Z" fill="#3b404a"/><path d="M2.9 5.1H7.7Q7.3 7.6 5.3 7.6Q3.3 7.6 2.9 5.1Z" fill="#fff"/></svg>
<svg class="a" style="left:46px;top:625.2px" width="10" height="10" viewBox="0 0 10 10"><circle cx="5" cy="5" r="4.9" fill="#3b404a"/><path d="M3.4 3.8Q3.4 2.3 5 2.3Q6.6 2.3 6.6 3.7Q6.6 4.6 5.5 5.1Q5 5.4 5 6.2" stroke="#fff" stroke-width="1.1" fill="none"/><circle cx="5" cy="7.7" r="0.65" fill="#fff"/></svg>
<svg class="a" style="left:74px;top:618px" width="22" height="20" viewBox="0 0 22 20"><path d="M4 20Q9 8 14 3Q16.5 0.8 21 0.5" stroke="#dedee2" stroke-width="1" fill="none"/></svg>
<div class="a" style="left:92.6px;top:625.8px;width:18.2px;height:8.6px;border-radius:4.3px;background:#4c87d3"></div>
<div class="a" style="left:103.2px;top:626.4px;width:7.4px;height:7.4px;border-radius:50%;background:#f0a91c"></div>
<div class="a" style="left:96px;top:629.5px;width:1.2px;height:1.2px;background:#c8dcf5"></div>
<div class="a" style="left:99px;top:627.8px;width:2px;height:1px;background:#e8f0fb"></div>
<div class="a" style="left:99px;top:631.8px;width:2px;height:1px;background:#e8f0fb"></div>
<div class="a" style="left:431.8px;top:623.6px;width:71.6px;height:16px;border-radius:4px 4px 0 0;background:#f7f7f9;border:0.8px solid #e7e7ea"></div>
<svg class="a" style="left:440.5px;top:628px" width="9" height="8" viewBox="0 0 9 8"><path d="M0.8 4V1.8Q0.8 0.8 1.8 0.8H5.5" stroke="#f5b240" stroke-width="1" fill="none"/><rect x="2.3" y="2.6" width="6.4" height="5" rx="1.1" fill="#f39a3a"/><rect x="3.6" y="4.4" width="2.1" height="1.4" fill="#fdf0dc"/></svg>
<div class="t" style="left:452.6px;top:629.3px;font-size:6.9px;color:#2e2e31">Codes</div>
<svg class="a" style="left:478.3px;top:628.3px" width="7" height="7" viewBox="0 0 7 7"><path d="M3.5 0.2L6.8 3.5L3.5 6.8L0.2 3.5Z" fill="#9a7ae6"/></svg>
<div class="t" style="left:488px;top:629.3px;font-size:6.9px;color:#8a6be0">8</div>
<div class="a" style="left:509px;top:623.6px;width:92.5px;height:16px;border-radius:4px 4px 0 0;background:#f7f7f9;border:0.8px solid #e7e7ea"></div>
<svg class="a" style="left:517.5px;top:627.5px" width="9" height="9" viewBox="0 0 9 9"><path d="M2.8 0.8L0.8 4.5L2.8 8.2" stroke="#f4b03c" stroke-width="1" fill="none"/><circle cx="5.5" cy="4.5" r="2" fill="none" stroke="#e8463c" stroke-width="1"/><path d="M5.5 0.3V2.5M5.5 6.5V8.7" stroke="#e8463c" stroke-width="0.9"/></svg>
<div class="t" style="left:529.5px;top:629.3px;font-size:6.9px;color:#2e2e31">Retrieved Segments</div>

<!-- ================= MODAL ================= -->
<div class="a" style="left:104px;top:100px;width:852px;height:489px;border-radius:5px;background:#fbfbfb;box-shadow:0 3px 9px rgba(0,0,0,0.2),0 0 1px rgba(0,0,0,0.3);overflow:hidden">
 <div class="a" style="left:0;top:0;width:852px;height:16.5px;background:#3d424d"></div>
 <div class="a" style="left:0;top:16.5px;width:852px;height:67px;background:#333743"></div>
 <div class="a" style="left:0;top:38px;width:852px;height:1px;background:#2a2d36"></div>
 <div class="a" style="left:0;top:83.5px;width:244px;height:405.5px;background:#fcfcfc"></div>
 <div class="a" style="left:244px;top:83.5px;width:1.2px;height:405.5px;background:#dedee1"></div>
 <div class="a" style="left:245.2px;top:83.5px;width:606.8px;height:31.5px;background:#f5f5f7"></div>
 <div class="a" style="left:245.2px;top:115px;width:606.8px;height:374px;background:#fcfcfc"></div>
</div>
<div class="a" style="left:115.2px;top:104.6px;width:6.8px;height:6.8px;border-radius:50%;background:#ec5f57"></div>
<div class="a" style="left:126.1px;top:104.6px;width:6.8px;height:6.8px;border-radius:50%;background:#f4bf4f"></div>
<div class="a" style="left:136.6px;top:104.6px;width:6.8px;height:6.8px;border-radius:50%;background:#5fc454"></div>
<div class="t" style="left:503.3px;top:105.5px;font-size:6.9px;font-weight:bold;color:#e9e9ec">Survey Analysis</div>
<svg class="a" style="left:937px;top:104.5px" width="7.5" height="7.5" viewBox="0 0 9 9"><rect x="0" y="0" width="9" height="9" rx="1" fill="#4d4f8e"/><path d="M1.5 2.5H4M5 2.5H7.5M1.5 6.5H4M5 6.5H7.5" stroke="#8f89d6" stroke-width="1.2"/></svg>
<!-- tab -->
<div class="a" style="left:109.7px;top:122.5px;width:28.3px;height:15.5px;background:linear-gradient(180deg,#3b3f4a,#363a45);border-radius:2px 2px 0 0"></div>
<div class="a" style="left:109.7px;top:136.6px;width:28.3px;height:1.8px;background:#f2f2f2;border-radius:1px"></div>
<div class="t" style="left:115.2px;top:124.2px;font-size:7.3px;font-weight:bold;color:#f4f4f6">Start</div>
<svg class="a" style="left:827.5px;top:123.5px" width="10" height="9" viewBox="0 0 10 9"><path d="M2.5 1.2L1 2.8L2.5 4.4M1.2 2.8H6.2Q8.8 2.8 8.8 5.3Q8.8 7.8 6.2 7.8H3.5" stroke="#d8d8dc" stroke-width="1.1" fill="none"/></svg>
<svg class="a" style="left:848.6px;top:123.5px" width="10" height="9" viewBox="0 0 10 9"><path d="M7.5 1.2L9 2.8L7.5 4.4M8.8 2.8H3.8Q1.2 2.8 1.2 5.3Q1.2 7.8 3.8 7.8H6.5" stroke="#5f636c" stroke-width="1.1" fill="none"/></svg>
<svg class="a" style="left:941.5px;top:123.2px" width="9.5" height="9.5" viewBox="0 0 10 10"><circle cx="5" cy="5" r="4.7" fill="#f4f4f6"/><path d="M3.4 3.9Q3.4 2.4 5 2.4Q6.6 2.4 6.6 3.8Q6.6 4.7 5.5 5.2Q5 5.5 5 6.3" stroke="#30343f" stroke-width="1.1" fill="none"/><circle cx="5" cy="7.7" r="0.65" fill="#30343f"/></svg>
<!-- ribbon -->
<svg class="a" style="left:123.5px;top:143px" width="14.5" height="18.5" viewBox="0 0 14.5 18.5"><path d="M1.5 0.3H8.5L13.5 5.3V17Q13.5 18.2 12.3 18.2H1.5Q0.3 18.2 0.3 17V1.5Q0.3 0.3 1.5 0.3Z" fill="#858892"/><path d="M6.5 10H14.5L11.5 13.5V18.5H9.5V13.5Z" fill="#b9bbc1" stroke="#30343f" stroke-width="0.9"/></svg>
<div class="t" style="left:107px;top:166.0px;font-size:7.1px;color:#62666f;width:46px;text-align:center">Only activated</div>
<div class="t" style="left:107px;top:174.4px;font-size:7.1px;color:#62666f;width:46px;text-align:center">documents</div>
<div class="a" style="left:156.2px;top:144px;width:1px;height:36px;background:#262931"></div>
<svg class="a" style="left:169px;top:144.8px" width="17" height="16" viewBox="0 0 17 16"><rect x="0.7" y="0.7" width="14.5" height="14" rx="1.5" fill="none" stroke="#6a707b" stroke-width="1.3"/><path d="M3 9.5L6 6.5L8 7.5L12 3.5" stroke="#4a8fe6" stroke-width="1.2" fill="none"/><path d="M9 9.3H11.5L12.3 10.2H16V15.5H9Z" fill="#f5c143"/></svg>
<div class="t" style="left:157px;top:166.0px;font-size:7.1px;color:#eceef0;width:40px;text-align:center">Analyze in</div>
<div class="t" style="left:157px;top:174.4px;font-size:7.1px;color:#eceef0;width:40px;text-align:center">Stats</div>
<div class="a" style="left:196px;top:144px;width:1px;height:36px;background:#262931"></div>
<svg class="a" style="left:213.5px;top:143.7px" width="16.5" height="16.5" viewBox="0 0 16 16"><rect x="0" y="0" width="7.6" height="7.6" rx="1" fill="#f3c041"/><rect x="8.4" y="0" width="7.6" height="7.6" rx="1" fill="#f09a4c"/><rect x="0" y="8.4" width="7.6" height="7.6" rx="1" fill="#50b457"/><rect x="8.4" y="8.4" width="7.6" height="7.6" rx="1" fill="#4b8fe8"/><circle cx="8" cy="3.8" r="1.6" fill="#f3c041"/><circle cx="3.8" cy="8" r="1.6" fill="#50b457"/><circle cx="12.2" cy="8" r="1.6" fill="#f09a4c"/><circle cx="8" cy="12.2" r="1.6" fill="#4b8fe8"/></svg>
<div class="t" style="left:198px;top:166.0px;font-size:7.1px;color:#eceef0;width:47px;text-align:center">Send to QTT</div>
<div class="t" style="left:202.5px;top:174.4px;font-size:7.1px;color:#eceef0">Worksheet</div><svg class="a" style="left:238.2px;top:175.8px" width="5" height="4" viewBox="0 0 5 4"><path d="M0.6 0.8L2.5 2.8L4.4 0.8" stroke="#eceef0" stroke-width="1" fill="none"/></svg>
<div class="a" style="left:245.3px;top:144px;width:1px;height:36px;background:#262931"></div>
<svg class="a" style="left:251.5px;top:144.3px" width="16.5" height="16" viewBox="0 0 16.5 16"><rect x="3.5" y="0.3" width="9.5" height="3" rx="1" fill="#6c717b"/><rect x="0.3" y="3" width="16" height="8" rx="2.2" fill="#7a7f89"/><rect x="2" y="5" width="2" height="1" fill="#c9ccd1"/><rect x="3.5" y="8.5" width="9.5" height="7.5" rx="0.8" fill="#4a90e6"/><path d="M5 10.8H10M5 12.8H8.5" stroke="#cfe2fb" stroke-width="0.8"/></svg>
<div class="t" style="left:252.5px;top:166.0px;font-size:7.1px;color:#eceef0">Print</div>
<svg class="a" style="left:278.8px;top:144.3px" width="16.5" height="16" viewBox="0 0 16.5 16"><path d="M8.2 0.5L4.8 4.2H7V10H9.5V4.2H11.7Z" fill="#ea4d45"/><path d="M1 9.5V14.2Q1 15.2 2 15.2H14.5Q15.5 15.2 15.5 14.2V9.5" stroke="#4a8fe6" stroke-width="1.3" fill="none"/></svg>
<div class="t" style="left:276.6px;top:166.0px;font-size:7.1px;color:#eceef0">Export</div>
<div class="a" style="left:303.8px;top:144px;width:1px;height:36px;background:#262931"></div>
<svg class="a" style="left:315.8px;top:144.3px" width="16.5" height="16" viewBox="0 0 16.5 16"><rect x="0.8" y="0.8" width="15" height="14.5" rx="2.5" fill="none" stroke="#5e636d" stroke-width="1.4"/><path d="M5.8 4.5H12M5.8 7H12M5.8 9.5H12M5.8 12H12" stroke="#9b6ee0" stroke-width="1.2"/><path d="M3.8 4.5H4.6M3.8 7H4.6M3.8 9.5H4.6M3.8 12H4.6" stroke="#9b6ee0" stroke-width="1"/></svg>
<div class="t" style="left:305px;top:166.0px;font-size:7.1px;color:#eceef0;width:38px;text-align:center">Add</div>
<div class="t" style="left:305px;top:174.4px;font-size:7.1px;color:#eceef0;width:38px;text-align:center">variable</div>
<div class="a" style="left:342.4px;top:144px;width:1px;height:36px;background:#262931"></div>
<!-- counts -->
<svg class="a" style="left:887.5px;top:170px" width="10" height="8" viewBox="0 0 10 8"><path d="M1 4.5V2Q1 1 2 1H6" stroke="#9b6ee0" stroke-width="1.1" fill="none"/><rect x="2.8" y="3" width="7" height="4.8" rx="1.2" fill="#a772ea"/><rect x="4.3" y="4.8" width="2.2" height="1.4" fill="#30343f"/></svg>
<div class="t" style="left:899px;top:170.8px;font-size:7.5px;color:#e6e6ea">3</div>
<svg class="a" style="left:908px;top:169.8px" width="9" height="9" viewBox="0 0 9 9"><rect x="0" y="0" width="6.5" height="8" rx="1" fill="#c9c9d2"/><rect x="3.5" y="4.5" width="5.5" height="4.5" rx="0.8" fill="#9b6ee0"/></svg>
<div class="t" style="left:918.5px;top:170.8px;font-size:7.5px;color:#e6e6ea">20</div>
<svg class="a" style="left:932.5px;top:169.8px" width="8" height="9" viewBox="0 0 8 9"><path d="M0 1Q0 0 1 0H5L7 2V8Q7 9 6 9H1Q0 9 0 8Z" fill="#c9c9d2"/><path d="M2 4.5V8.5H6.5" stroke="#9b6ee0" stroke-width="1.6" fill="none"/></svg>
<div class="t" style="left:942.5px;top:170.8px;font-size:7.5px;color:#e6e6ea">55</div>

<div class="a" style="left:104px;top:215px;width:244px;height:374px;overflow:hidden;border-radius:0 0 0 5px">
<svg class="a" style="left:10.2px;top:9.8px" width="9" height="7" viewBox="0 0 9 7"><rect x="0.1" y="0" width="8.6" height="5.2" rx="1.4" fill="#d3d9e3"/><rect x="1.3" y="1.3" width="2" height="2.6" fill="#f7f8fa"/><circle cx="6.8" cy="4.9" r="1.7" fill="#3d8ef0"/></svg>
<div class="t" style="left:24.4px;top:9.8px;font-size:7.9px;transform:scaleX(0.968);transform-origin:0 0;color:#3a3a3d">Response ID</div>
<svg class="a" style="left:10.7px;top:28.8px" width="8" height="8" viewBox="0 0 8 8"><rect x="0.2" y="1.6" width="1.9" height="5.8" rx="0.4" fill="#4e8fe8"/><rect x="2.9" y="3.5" width="1.9" height="3.9" rx="0.4" fill="#ec5b78"/><rect x="5.6" y="0" width="2.1" height="7.4" rx="0.4" fill="#f4bd42"/></svg>
<div class="t" style="left:24.4px;top:29.8px;font-size:7.9px;transform:scaleX(0.968);transform-origin:0 0;color:#3a3a3d">Response ID</div>
<svg class="a" style="left:10.7px;top:48.8px" width="8" height="8" viewBox="0 0 8 8"><rect x="0.2" y="1.6" width="1.9" height="5.8" rx="0.4" fill="#4e8fe8"/><rect x="2.9" y="3.5" width="1.9" height="3.9" rx="0.4" fill="#ec5b78"/><rect x="5.6" y="0" width="2.1" height="7.4" rx="0.4" fill="#f4bd42"/></svg>
<div class="t" style="left:24.4px;top:49.8px;font-size:7.9px;transform:scaleX(0.968);transform-origin:0 0;color:#3a3a3d">What is your relationship status?</div>
<svg class="a" style="left:10.7px;top:68.8px" width="8" height="8" viewBox="0 0 8 8"><rect x="0.2" y="1.6" width="1.9" height="5.8" rx="0.4" fill="#4e8fe8"/><rect x="2.9" y="3.5" width="1.9" height="3.9" rx="0.4" fill="#ec5b78"/><rect x="5.6" y="0" width="2.1" height="7.4" rx="0.4" fill="#f4bd42"/></svg>
<div class="t" style="left:24.4px;top:69.8px;font-size:7.9px;transform:scaleX(0.968);transform-origin:0 0;color:#3a3a3d">Do you have any children?</div>
<svg class="a" style="left:10.7px;top:88.8px" width="8" height="8" viewBox="0 0 8 8"><rect x="0.2" y="1.6" width="1.9" height="5.8" rx="0.4" fill="#4e8fe8"/><rect x="2.9" y="3.5" width="1.9" height="3.9" rx="0.4" fill="#ec5b78"/><rect x="5.6" y="0" width="2.1" height="7.4" rx="0.4" fill="#f4bd42"/></svg>
<div class="t" style="left:24.4px;top:89.8px;font-size:7.9px;transform:scaleX(0.968);transform-origin:0 0;color:#3a3a3d">If yes, how many?</div>
<svg class="a" style="left:10.7px;top:108.8px" width="8" height="8" viewBox="0 0 8 8"><rect x="0.2" y="1.6" width="1.9" height="5.8" rx="0.4" fill="#4e8fe8"/><rect x="2.9" y="3.5" width="1.9" height="3.9" rx="0.4" fill="#ec5b78"/><rect x="5.6" y="0" width="2.1" height="7.4" rx="0.4" fill="#f4bd42"/></svg>
<div class="t" style="left:24.4px;top:109.8px;font-size:7.9px;transform:scaleX(0.968);transform-origin:0 0;color:#3a3a3d">What is the highest education level that you have attained?</div>
<svg class="a" style="left:10.7px;top:128.8px" width="8" height="8" viewBox="0 0 8 8"><rect x="0.2" y="1.6" width="1.9" height="5.8" rx="0.4" fill="#4e8fe8"/><rect x="2.9" y="3.5" width="1.9" height="3.9" rx="0.4" fill="#ec5b78"/><rect x="5.6" y="0" width="2.1" height="7.4" rx="0.4" fill="#f4bd42"/></svg>
<div class="t" style="left:24.4px;top:129.8px;font-size:7.9px;transform:scaleX(0.968);transform-origin:0 0;color:#3a3a3d">Your current time allocation [Paid work]</div>
<svg class="a" style="left:10.7px;top:148.8px" width="8" height="8" viewBox="0 0 8 8"><rect x="0.2" y="1.6" width="1.9" height="5.8" rx="0.4" fill="#4e8fe8"/><rect x="2.9" y="3.5" width="1.9" height="3.9" rx="0.4" fill="#ec5b78"/><rect x="5.6" y="0" width="2.1" height="7.4" rx="0.4" fill="#f4bd42"/></svg>
<div class="t" style="left:24.4px;top:149.8px;font-size:7.9px;transform:scaleX(0.968);transform-origin:0 0;color:#3a3a3d">Your current time allocation [Studying or further education]</div>
<svg class="a" style="left:10.7px;top:168.8px" width="8" height="8" viewBox="0 0 8 8"><rect x="0.2" y="1.6" width="1.9" height="5.8" rx="0.4" fill="#4e8fe8"/><rect x="2.9" y="3.5" width="1.9" height="3.9" rx="0.4" fill="#ec5b78"/><rect x="5.6" y="0" width="2.1" height="7.4" rx="0.4" fill="#f4bd42"/></svg>
<div class="t" style="left:24.4px;top:169.8px;font-size:7.9px;transform:scaleX(0.968);transform-origin:0 0;color:#3a3a3d">Your current time allocation [Unpaid work]</div>
<svg class="a" style="left:10.7px;top:188.8px" width="8" height="8" viewBox="0 0 8 8"><rect x="0.2" y="1.6" width="1.9" height="5.8" rx="0.4" fill="#4e8fe8"/><rect x="2.9" y="3.5" width="1.9" height="3.9" rx="0.4" fill="#ec5b78"/><rect x="5.6" y="0" width="2.1" height="7.4" rx="0.4" fill="#f4bd42"/></svg>
<div class="t" style="left:24.4px;top:189.8px;font-size:7.9px;transform:scaleX(0.968);transform-origin:0 0;color:#3a3a3d">Your current time allocation [Leisure time / personal care]</div>
<svg class="a" style="left:10.7px;top:208.8px" width="8" height="8" viewBox="0 0 8 8"><rect x="0.2" y="1.6" width="1.9" height="5.8" rx="0.4" fill="#4e8fe8"/><rect x="2.9" y="3.5" width="1.9" height="3.9" rx="0.4" fill="#ec5b78"/><rect x="5.6" y="0" width="2.1" height="7.4" rx="0.4" fill="#f4bd42"/></svg>
<div class="t" style="left:24.4px;top:209.8px;font-size:7.9px;transform:scaleX(0.968);transform-origin:0 0;color:#3a3a3d">Spend more time [Paid work]</div>
<svg class="a" style="left:10.7px;top:228.8px" width="8" height="8" viewBox="0 0 8 8"><rect x="0.2" y="1.6" width="1.9" height="5.8" rx="0.4" fill="#4e8fe8"/><rect x="2.9" y="3.5" width="1.9" height="3.9" rx="0.4" fill="#ec5b78"/><rect x="5.6" y="0" width="2.1" height="7.4" rx="0.4" fill="#f4bd42"/></svg>
<div class="t" style="left:24.4px;top:229.8px;font-size:7.9px;transform:scaleX(0.968);transform-origin:0 0;color:#3a3a3d">Spend more time [Unpaid work]</div>
<svg class="a" style="left:10.7px;top:248.8px" width="8" height="8" viewBox="0 0 8 8"><rect x="0.2" y="1.6" width="1.9" height="5.8" rx="0.4" fill="#4e8fe8"/><rect x="2.9" y="3.5" width="1.9" height="3.9" rx="0.4" fill="#ec5b78"/><rect x="5.6" y="0" width="2.1" height="7.4" rx="0.4" fill="#f4bd42"/></svg>
<div class="t" style="left:24.4px;top:249.8px;font-size:7.9px;transform:scaleX(0.968);transform-origin:0 0;color:#3a3a3d">Spend more time [Studying or further education]</div>
<svg class="a" style="left:10.7px;top:268.8px" width="8" height="8" viewBox="0 0 8 8"><rect x="0.2" y="1.6" width="1.9" height="5.8" rx="0.4" fill="#4e8fe8"/><rect x="2.9" y="3.5" width="1.9" height="3.9" rx="0.4" fill="#ec5b78"/><rect x="5.6" y="0" width="2.1" height="7.4" rx="0.4" fill="#f4bd42"/></svg>
<div class="t" style="left:24.4px;top:269.8px;font-size:7.9px;transform:scaleX(0.968);transform-origin:0 0;color:#3a3a3d">Spend more time [Leisure time or personal care]</div>
<svg class="a" style="left:10.7px;top:288.8px" width="8" height="8" viewBox="0 0 8 8"><rect x="0.2" y="1.6" width="1.9" height="5.8" rx="0.4" fill="#4e8fe8"/><rect x="2.9" y="3.5" width="1.9" height="3.9" rx="0.4" fill="#ec5b78"/><rect x="5.6" y="0" width="2.1" height="7.4" rx="0.4" fill="#f4bd42"/></svg>
<div class="t" style="left:24.4px;top:289.8px;font-size:7.9px;transform:scaleX(0.968);transform-origin:0 0;color:#3a3a3d">Spend more time [Other]</div>
<svg class="a" style="left:10.2px;top:315.2px" width="9" height="7" viewBox="0 0 9 7"><rect x="0.1" y="0" width="8.6" height="5.2" rx="1.4" fill="#d3d9e3"/><rect x="1.3" y="1.3" width="2" height="2.6" fill="#f7f8fa"/><circle cx="6.8" cy="4.9" r="1.7" fill="#3d8ef0"/></svg>
<div class="t" style="left:24.4px;top:310.6px;font-size:7.9px;transform:scaleX(0.968);transform-origin:0 0;color:#3a3a3d">Please explain your answer to the previous question. Why would</div>
<div class="t" style="left:24.4px;top:319.8px;font-size:7.9px;transform:scaleX(0.968);transform-origin:0 0;color:#3a3a3d">you like to spend more time on this particular activity?</div>
<svg class="a" style="left:10.7px;top:338.8px" width="8" height="8" viewBox="0 0 8 8"><rect x="0.2" y="1.6" width="1.9" height="5.8" rx="0.4" fill="#4e8fe8"/><rect x="2.9" y="3.5" width="1.9" height="3.9" rx="0.4" fill="#ec5b78"/><rect x="5.6" y="0" width="2.1" height="7.4" rx="0.4" fill="#f4bd42"/></svg>
<div class="t" style="left:24.4px;top:339.8px;font-size:7.9px;transform:scaleX(0.968);transform-origin:0 0;color:#3a3a3d">Are there any flexible work arrangements available at your work</div>
<svg class="a" style="left:10.2px;top:364.4px" width="9" height="7" viewBox="0 0 9 7"><rect x="0.1" y="0" width="8.6" height="5.2" rx="1.4" fill="#d3d9e3"/><rect x="1.3" y="1.3" width="2" height="2.6" fill="#f7f8fa"/><circle cx="6.8" cy="4.9" r="1.7" fill="#3d8ef0"/></svg>
<div class="t" style="left:24.4px;top:359.8px;font-size:7.9px;transform:scaleX(0.968);transform-origin:0 0;color:#3a3a3d">What type of flexible work arrangements are available at your</div>
<div class="t" style="left:24.4px;top:369.0px;font-size:7.9px;transform:scaleX(0.968);transform-origin:0 0;color:#3a3a3d">workplace?</div>
</div>
<div class="a" style="left:109px;top:190.5px;width:80.5px;height:17.2px;border-radius:3.5px;background:#e9e9eb"></div>
<svg class="a" style="left:112.5px;top:195px" width="9" height="9" viewBox="0 0 9 9"><circle cx="3.7" cy="3.7" r="2.7" fill="none" stroke="#59595d" stroke-width="1"/><path d="M5.8 5.8L8 8" stroke="#59595d" stroke-width="1.1" stroke-linecap="round"/></svg>
<div class="a" style="left:124px;top:194.7px;width:0.8px;height:8.4px;background:#2a2a2d"></div>
<div class="t" style="left:125px;top:195.3px;font-size:7.6px;color:#b4b4b8">Questions</div>
<svg class="a" style="left:221.5px;top:195.5px" width="8" height="6" viewBox="0 0 8 6"><path d="M0.3 0.6H7.7M1.5 2.9H6.5M2.8 5.2H5.2" stroke="#8cb4ef" stroke-width="1.1"/></svg>
<div class="a" style="left:239.5px;top:192.5px;width:103px;height:11.5px;border-radius:4px;background:#fdfdfd;border:0.9px solid #cfcfd3"></div>
<svg class="a" style="left:246.5px;top:194.5px" width="8" height="8" viewBox="0 0 8 8"><rect x="0" y="0" width="8" height="8" rx="1" fill="#bcc0f0"/><path d="M1.3 2.2H6.7M1.3 4H6.7M1.3 5.8H6.7" stroke="#9196dc" stroke-width="0.7"/></svg>
<div class="t" style="left:255.5px;top:194.9px;font-size:7.1px;color:#3c3c40">Survey Results Work...</div>
<svg class="a" style="left:332.5px;top:196.5px" width="6" height="4" viewBox="0 0 6 4"><path d="M0.7 0.8L3 3.1L5.3 0.8" stroke="#333" stroke-width="1" fill="none"/></svg>
<div class="a" style="left:104px;top:212px;width:244px;height:0.8px;background:#e8e8ea"></div>

<div class="a" style="left:355.9px;top:192.3px;width:68.8px;height:17.2px;border-radius:4px;border:0.9px solid #d6d6da;background:#f8f8f9"></div>
<div class="a" style="left:373.4px;top:193.2px;width:16.6px;height:15.4px;background:#e4e9f1"></div>
<svg class="a" style="left:360.5px;top:196.8px" width="8" height="8" viewBox="0 0 8 8"><rect x="0.4" y="0.4" width="7.2" height="7.2" rx="1" fill="#eef0f3" stroke="#8d9199" stroke-width="0.8"/><rect x="3" y="0.8" width="2" height="6.4" fill="#f4bd42"/><path d="M0.8 2.8H7.2M0.8 5.2H7.2" stroke="#8d9199" stroke-width="0.6"/></svg>
<svg class="a" style="left:377.7px;top:196.8px" width="8" height="8" viewBox="0 0 8 8"><rect x="0.2" y="2.6" width="1.9" height="5.2" fill="#4e8fe8"/><rect x="2.9" y="4.2" width="1.9" height="3.6" fill="#ec5b78"/><rect x="5.6" y="0.6" width="2" height="7.2" fill="#f4bd42"/></svg>
<svg class="a" style="left:394.9px;top:196.8px" width="8" height="8" viewBox="0 0 8 8"><rect x="0.2" y="0.5" width="5" height="1.6" fill="#4e8fe8"/><rect x="0.2" y="3.1" width="3.2" height="1.6" fill="#ec5b78"/><rect x="0.2" y="5.8" width="7.6" height="1.7" fill="#f4bd42"/></svg>
<svg class="a" style="left:412.2px;top:196.6px" width="8.5" height="8.5" viewBox="0 0 10 10"><circle cx="5" cy="5" r="4.6" fill="#f4bd42"/><path d="M5 5V0.4A4.6 4.6 0 0 1 9.2 6.9Z" fill="#4e8fe8"/><path d="M5 5L9.2 6.9A4.6 4.6 0 0 1 0.9 7.2Z" fill="#ec5b78"/></svg>
<div class="a" style="left:439px;top:192.3px;width:17px;height:17.2px;border-radius:3.5px;background:#e3e9f2"></div>
<div class="a" style="left:456.6px;top:192.3px;width:16.4px;height:17.2px;border-radius:3.5px;background:#e3e9f2"></div>
<div class="a" style="left:473.6px;top:192.3px;width:16.8px;height:17.2px;border-radius:3.5px;background:#e3e9f2"></div>
<svg class="a" style="left:443.5px;top:196.5px" width="9" height="9" viewBox="0 0 9 9"><path d="M0.6 1.2Q0.6 0.6 1.2 0.6H4.3L8.4 4.7Q8.9 5.2 8.4 5.7L5.7 8.4Q5.2 8.9 4.7 8.4L0.6 4.3Z" fill="#4e8fe8"/><circle cx="2.8" cy="2.8" r="0.9" fill="#e3e9f2"/></svg>
<svg class="a" style="left:460.3px;top:196.5px" width="9" height="9" viewBox="0 0 9 9"><path d="M3.2 0.5L2.2 8.5M6.6 0.5L5.6 8.5M0.6 3H8.4M0.4 6H8.2" stroke="#4e8fe8" stroke-width="1.25"/></svg>
<svg class="a" style="left:477.8px;top:196.3px" width="9" height="9" viewBox="0 0 9 9"><circle cx="2.2" cy="2.3" r="1.55" fill="none" stroke="#4e8fe8" stroke-width="1.1"/><circle cx="6.8" cy="6.7" r="1.55" fill="none" stroke="#4e8fe8" stroke-width="1.1"/><path d="M7.3 0.8L1.7 8.2" stroke="#4e8fe8" stroke-width="1.1"/></svg>
<svg class="a" style="left:495px;top:196.4px" width="9" height="9" viewBox="0 0 9 9"><rect x="0.5" y="0.5" width="8" height="8" rx="1.2" fill="#fafafa" stroke="#8a8e96" stroke-width="0.9"/><path d="M2.5 6.5H4.8M4 3.2V6.3" stroke="#4e8fe8" stroke-width="0.8"/></svg>
<svg class="a" style="left:512.8px;top:196.6px" width="8" height="8" viewBox="0 0 8 8"><rect x="0.3" y="3" width="1.9" height="5" fill="#4e8fe8"/><rect x="3" y="1.5" width="1.9" height="6.5" fill="#4e8fe8"/><rect x="5.8" y="0" width="1.9" height="8" fill="#a9c8f3"/></svg>
<svg class="a" style="left:530px;top:196.6px" width="8" height="8" viewBox="0 0 8 8"><circle cx="1" cy="1" r="0.9" fill="#f4bd42"/><circle cx="1" cy="4" r="0.9" fill="#4e8fe8"/><circle cx="1" cy="7" r="0.9" fill="#ec5b78"/><path d="M2.8 1H8M2.8 4H8M2.8 7H8" stroke="#5b5f66" stroke-width="1"/></svg>
<div class="a" style="left:543px;top:192.3px;width:17px;height:17.2px;border-radius:3.5px;background:#e3e9f2"></div>
<div class="a" style="left:560.7px;top:192.3px;width:16.6px;height:17.2px;border-radius:3.5px;background:#e3e9f2"></div>
<svg class="a" style="left:547px;top:196.6px" width="8.5" height="8" viewBox="0 0 9 8"><path d="M0.5 0V7.5H9" stroke="#8a8e96" stroke-width="0.8" fill="none"/><path d="M2 2V7M4 3V7M6 1.5V7" stroke="#8aaee8" stroke-width="1"/><path d="M1 4H8.5" stroke="#c4c7cc" stroke-width="0.5"/></svg>
<svg class="a" style="left:564.5px;top:196.4px" width="8.5" height="8.5" viewBox="0 0 9 9"><rect x="0.4" y="0.4" width="8.2" height="8.2" fill="#eef1f5" stroke="#7b8088" stroke-width="0.8"/><rect x="0.8" y="0.8" width="7.4" height="1.8" fill="#f4bd42"/><path d="M2.3 4V8M4.5 3.5V8M6.7 4.5V8" stroke="#4e8fe8" stroke-width="1.2"/></svg>
<svg class="a" style="left:581.5px;top:196.4px" width="8.5" height="8.5" viewBox="0 0 9 9"><path d="M1 1V6.5M3.3 2.5V6.5M5.6 0.5V6.5M7.9 2V6.5" stroke="#4e8fe8" stroke-width="1.3"/><rect x="0" y="7" width="9" height="2" fill="#f4bd42"/></svg>
<svg class="a" style="left:599.3px;top:196.6px" width="8" height="8" viewBox="0 0 8 8"><rect x="0" y="0" width="3.5" height="3.5" rx="0.6" fill="#9b7ae8"/><rect x="4.5" y="0" width="3.5" height="3.5" rx="0.6" fill="#ec5b78"/><rect x="0" y="4.5" width="3.5" height="3.5" rx="0.6" fill="#f4bd42"/><rect x="4.5" y="4.5" width="3.5" height="3.5" rx="0.6" fill="#38c0d8"/></svg>
<svg class="a" style="left:624.7px;top:196.6px" width="8" height="8" viewBox="0 0 8 8"><rect x="0" y="0" width="3.5" height="3.5" rx="0.6" fill="#9b7ae8"/><rect x="4.5" y="0" width="3.5" height="3.5" rx="0.6" fill="#ec5b78"/><rect x="0" y="4.5" width="3.5" height="3.5" rx="0.6" fill="#f4bd42"/><circle cx="6.2" cy="6.2" r="1.6" fill="#5ab8f0"/></svg>
<svg class="a" style="left:641.5px;top:195.8px" width="9.5" height="9.5" viewBox="0 0 10 10"><rect x="0.5" y="0.5" width="6" height="6" rx="1" fill="#f2f2f4" stroke="#8a8e96" stroke-width="0.8"/><rect x="3.5" y="3.5" width="6" height="6" rx="1" fill="#eaeaf0" stroke="#8a8e96" stroke-width="0.8"/><rect x="4.5" y="4.5" width="2" height="2" fill="#9b7ae8"/><rect x="7" y="7" width="1.8" height="1.8" fill="#ec5b78"/><rect x="1.5" y="1.5" width="1.8" height="1.8" fill="#4e8fe8"/></svg>
<svg class="a" style="left:667.2px;top:196.2px" width="9" height="9" viewBox="0 0 9 9"><rect x="0.5" y="0.5" width="8" height="8" rx="1.2" fill="#f4f4f6" stroke="#c9ccd2" stroke-width="0.8"/><path d="M2.5 6L6 3" stroke="#b6cbe9" stroke-width="0.8"/></svg>
<svg class="a" style="left:919.5px;top:196.3px" width="9" height="9" viewBox="0 0 9 9"><rect x="0.3" y="2.3" width="5.6" height="6.4" rx="1" fill="#4e8fe8"/><rect x="2.8" y="0.2" width="6" height="6.4" rx="1" fill="#4e8fe8" stroke="#f5f5f7" stroke-width="0.8"/><path d="M5.8 1.6V5.2M4 3.4H7.6" stroke="#fff" stroke-width="0.9"/></svg>
<svg class="a" style="left:936.9px;top:196.2px" width="9" height="9" viewBox="0 0 10 10"><circle cx="5" cy="5" r="4.8" fill="#5a97ec"/><path d="M3.5 3.9Q3.5 2.5 5 2.5Q6.5 2.5 6.5 3.8Q6.5 4.6 5.5 5.1Q5 5.4 5 6.2" stroke="#fff" stroke-width="1" fill="none"/><circle cx="5" cy="7.6" r="0.6" fill="#fff"/></svg>

<div class="t" style="left:474px;top:219.7px;font-size:11.26px;font-weight:bold;color:#111">In general, how satisfied are you with your personal relationships?</div>
<div class="a" style="left:377px;top:562.0px;width:574px;height:1px;background:#e2e2e4"></div>
<div class="t" style="right:651.7px;top:559.2px;font-size:8.6px;color:#2e2e30">0%</div>
<div class="a" style="left:377px;top:530.0px;width:574px;height:1px;background:#e2e2e4"></div>
<div class="t" style="right:651.7px;top:527.2px;font-size:8.6px;color:#2e2e30">5%</div>
<div class="a" style="left:377px;top:498.0px;width:574px;height:1px;background:#e2e2e4"></div>
<div class="t" style="right:651.7px;top:495.2px;font-size:8.6px;color:#2e2e30">10%</div>
<div class="a" style="left:377px;top:466.0px;width:574px;height:1px;background:#e2e2e4"></div>
<div class="t" style="right:651.7px;top:463.2px;font-size:8.6px;color:#2e2e30">15%</div>
<div class="a" style="left:377px;top:434.0px;width:574px;height:1px;background:#e2e2e4"></div>
<div class="t" style="right:651.7px;top:431.2px;font-size:8.6px;color:#2e2e30">20%</div>
<div class="a" style="left:377px;top:402.0px;width:574px;height:1px;background:#e2e2e4"></div>
<div class="t" style="right:651.7px;top:399.2px;font-size:8.6px;color:#2e2e30">25%</div>
<div class="a" style="left:377px;top:370.0px;width:574px;height:1px;background:#e2e2e4"></div>
<div class="t" style="right:651.7px;top:367.2px;font-size:8.6px;color:#2e2e30">30%</div>
<div class="a" style="left:377px;top:338.0px;width:574px;height:1px;background:#e2e2e4"></div>
<div class="t" style="right:651.7px;top:335.2px;font-size:8.6px;color:#2e2e30">35%</div>
<div class="a" style="left:377px;top:306.0px;width:574px;height:1px;background:#e2e2e4"></div>
<div class="t" style="right:651.7px;top:303.2px;font-size:8.6px;color:#2e2e30">40%</div>
<div class="a" style="left:377px;top:274.0px;width:574px;height:1px;background:#e2e2e4"></div>
<div class="t" style="right:651.7px;top:271.2px;font-size:8.6px;color:#2e2e30">45%</div>
<div class="a" style="left:377px;top:242.0px;width:574px;height:1px;background:#e2e2e4"></div>
<div class="t" style="right:651.7px;top:239.2px;font-size:8.6px;color:#2e2e30">50%</div>
<div class="a" style="left:376.2px;top:242px;width:1px;height:321px;background:#e0e0e2"></div>
<div class="a" style="left:376.2px;top:562.2px;width:575px;height:1.6px;background:#dcdcde"></div>
<div class="a" style="left:406px;top:420.3px;width:86px;height:142.2px;background:#3280df"></div>
<div class="t" style="left:386px;width:126px;text-align:center;top:410.9px;font-size:8px;color:#222">22% (12)</div>
<div class="t" style="left:386px;width:126px;text-align:center;top:571.6px;font-size:8.1px;color:#222">Dissatisfied</div>
<div class="a" style="left:549.4px;top:491.4px;width:86px;height:71.1px;background:#63abef"></div>
<div class="t" style="left:529.4px;width:126px;text-align:center;top:482.0px;font-size:8px;color:#222">11% (6)</div>
<div class="t" style="left:529.4px;width:126px;text-align:center;top:571.6px;font-size:8.1px;color:#222">Neither</div>
<div class="a" style="left:692.9px;top:254.4px;width:86px;height:308.1px;background:#ab84e6"></div>
<div class="t" style="left:672.9px;width:126px;text-align:center;top:245.0px;font-size:8px;color:#222">48% (26)</div>
<div class="t" style="left:672.9px;width:126px;text-align:center;top:571.6px;font-size:8.1px;color:#222">Satisfied</div>
<div class="a" style="left:836.4px;top:444.0px;width:86px;height:118.5px;background:#df78b7"></div>
<div class="t" style="left:816.4px;width:126px;text-align:center;top:434.6px;font-size:8px;color:#222">19% (10)</div>
<div class="t" style="left:816.4px;width:126px;text-align:center;top:571.6px;font-size:8.1px;color:#222">Very satisfied</div>

<!-- ARROW OVERLAY -->
<svg class="a" style="left:0;top:0" width="1024" height="638" viewBox="0 0 1024 638">
 <rect x="149.6" y="69.6" width="45.3" height="22.1" rx="4.5" fill="none" stroke="#3b8be8" stroke-width="2.2"/>
 <path d="M172 69C192 65.2 300 39.5 400 39.5C485 39.5 491.5 83 491.5 94" fill="none" stroke="#3b8be8" stroke-width="2.3"/>
 <path d="M484.1 93.7L497.1 93.7L489.8 106.7Z" fill="#3b8be8"/>
 <path d="M184.3 80.8L184.3 88.5L186.2 86.7L187.6 89.8L188.8 89.2L187.4 86.3L190 86.1Z" fill="#1a1a1a" stroke="#fff" stroke-width="0.5"/>
</svg>

</body></html>
